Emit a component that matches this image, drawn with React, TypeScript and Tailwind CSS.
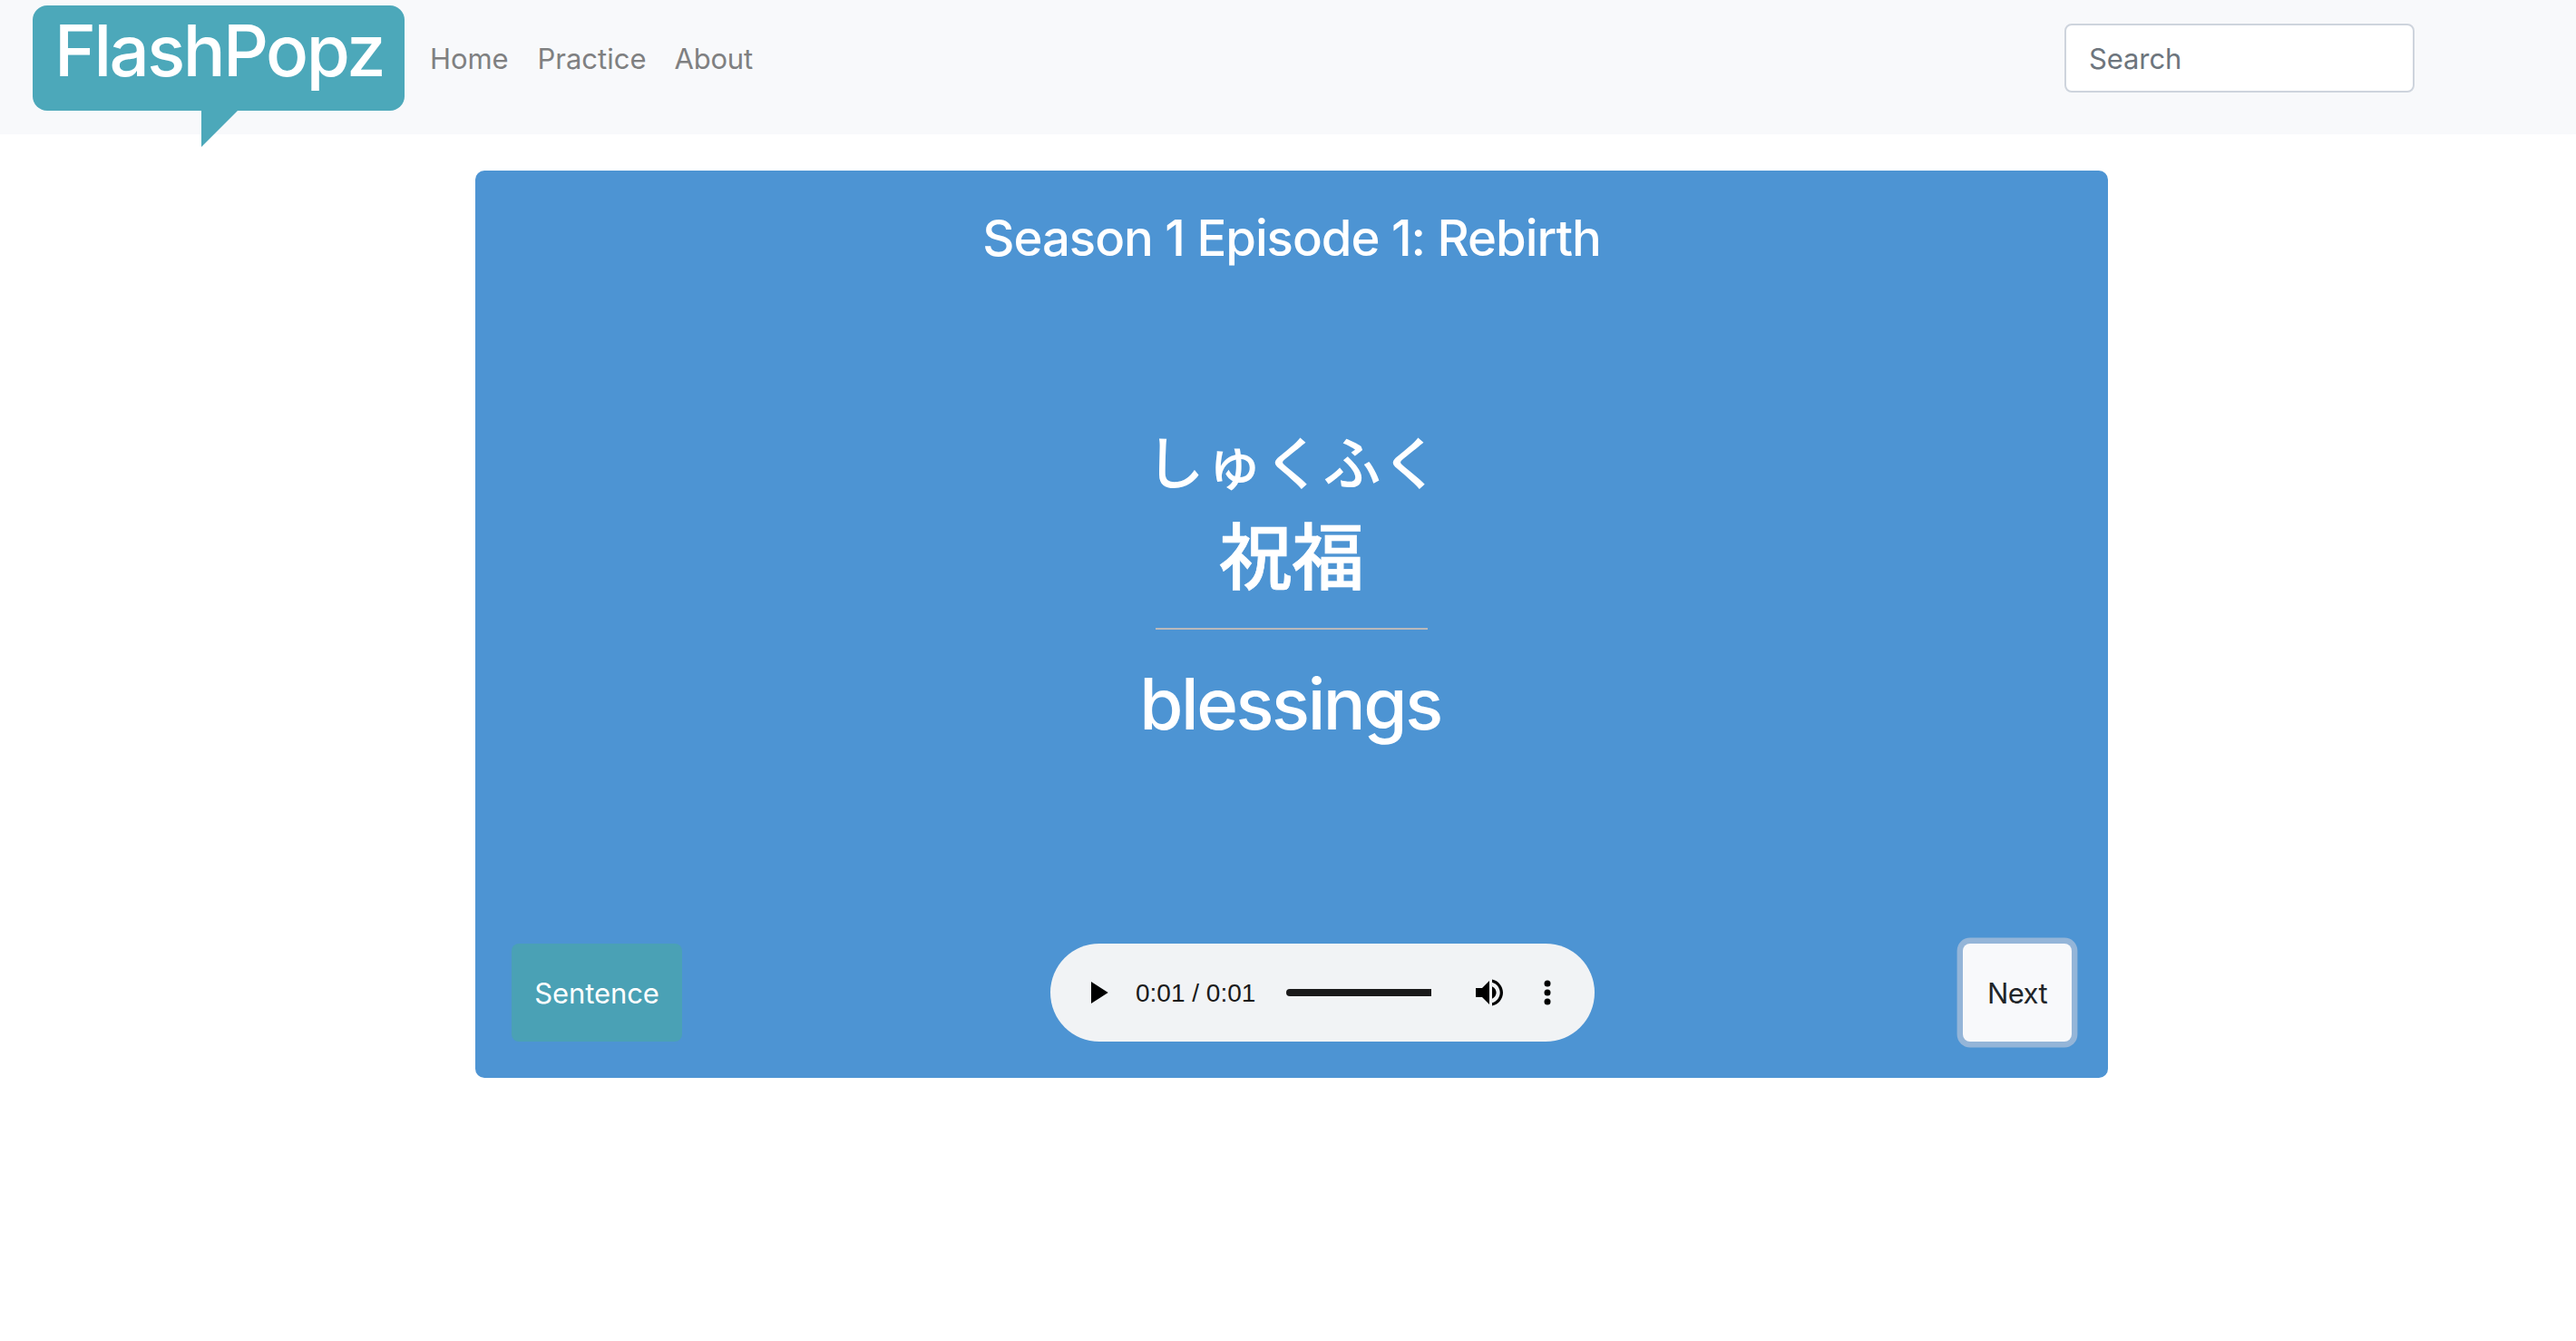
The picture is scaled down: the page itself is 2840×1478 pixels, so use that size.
const navLinks = [
  { label: 'Home', className: 'mr-8 tracking-[-0.1px]' },
  { label: 'Practice', className: 'mr-[31px]' },
  { label: 'About', className: 'tracking-[-0.2px]' },
]

function Navbar() {
  return (
    <nav className="flex h-[148px] items-start bg-[#f8f9fb] pt-1.5 pl-9">
      <a href="#" className="relative h-[116px] w-[410px] rounded-2xl bg-[#4ca8ba] pt-0.5 pl-6 text-white">
        <span className="block text-[78px] leading-[96px] font-medium tracking-[-2.55px]">FlashPopz</span>
        <svg className="absolute top-[116px] left-[186px]" width="40" height="40" viewBox="0 0 40 40">
          <path d="M0 0h40L0 40z" fill="#4ca8ba" />
        </svg>
      </a>
      <ul className="mt-[35px] ml-7 flex text-[31px] leading-[48px] text-[#7f8081]">
        {navLinks.map(({ label, className }) => (
          <li key={label} className={className}>
            <a href="#">{label}</a>
          </li>
        ))}
      </ul>
      <input
        type="search"
        placeholder="Search"
        className="mt-5 mr-[178px] ml-auto h-[76px] w-[386px] rounded-lg border-2 border-[#ced4dd] bg-white px-[25px] text-[31px] tracking-[-0.1px] placeholder:text-[#6d757d]"
      />
    </nav>
  )
}

function AudioPlayer() {
  return (
    <div className="ml-[406px] flex h-[108px] w-[600px] items-center rounded-full bg-[#f1f3f5]">
      <svg className="ml-[45px]" width="19" height="24" viewBox="0 0 19 24">
        <path d="M0 0v24l18.7-12z" />
      </svg>
      <span className="ml-[30px] w-[136px] pt-0.5 font-['Liberation_Sans',sans-serif] text-[28px] leading-8 whitespace-nowrap text-[#1a1a1a]">
        0:01 / 0:01
      </span>
      <div className="ml-[30px] h-2 w-40 rounded-l-full rounded-r-[2px] bg-[#1a1a1a]" />
      <svg className="ml-[49px]" width="30" height="30" viewBox="0 0 30 30">
        <path d="M0 10v10h7l8 8V2l-8 8z" />
        <path d="M18 8.2v13.6c2.8-1.3 4.6-3.9 4.6-6.8S20.8 9.500 18 8.2z" />
        <path d="M18 .4v3.300c5 1.300 8.700 5.900 8.700 11.300S23 25 18 26.300v3.300c6.900-1.400 12-7.500 12-14.600S24.900 1.800 18 .4z" />
      </svg>
      <svg className="ml-[45px]" width="8" height="30" viewBox="0 0 8 30">
        <circle cx="4" cy="5" r="3.5" />
        <circle cx="4" cy="15" r="3.5" />
        <circle cx="4" cy="25" r="3.5" />
      </svg>
    </div>
  )
}

function Flashcard() {
  return (
    <main className="mt-10 ml-[524px] flex h-[1000px] w-[1800px] flex-col rounded-[10px] bg-[#4d94d3] px-10 pt-[41px] pb-10 text-white">
      <h1 className="text-center text-[54.5px] leading-[66px] font-medium tracking-[-1.03px]">
        Season 1 Episode 1: Rebirth
      </h1>
      <div className="mt-[173px] flex flex-col items-center">
        <p className="pl-1 font-['Noto_Sans_CJK_JP',sans-serif] text-[64px] leading-[77px] font-medium tracking-[1px]">
          しゅくふく
        </p>
        <p className="mt-[15px] font-['Noto_Sans_CJK_JP',sans-serif] text-[80px] leading-[96px] font-medium [-webkit-text-stroke:0.7px_white]">
          祝福
        </p>
        <hr className="mt-9 h-0.5 w-[300px] border-0 bg-[#b9b9bb]" />
        <p className="mt-[34px] mr-[3px] text-[78px] leading-[96px] font-medium tracking-[-2.45px]">blessings</p>
      </div>
      <div className="mt-auto flex items-center">
        <button className="h-[108px] w-[188px] rounded-lg bg-[#4aa1b5] pt-0.5 text-[31px] tracking-[-0.1px]">
          Sentence
        </button>
        <AudioPlayer />
        <button className="ml-auto h-[108px] w-[120px] rounded-lg bg-[#f8f9fb] pt-0.5 text-[31px] tracking-[-0.6px] text-[#212529] ring-[6.4px] ring-[#94b5d8]">
          Next
        </button>
      </div>
    </main>
  )
}

export default function App() {
  return (
    <div className="min-h-screen bg-white font-['Inter',sans-serif]">
      <Navbar />
      <Flashcard />
    </div>
  )
}
